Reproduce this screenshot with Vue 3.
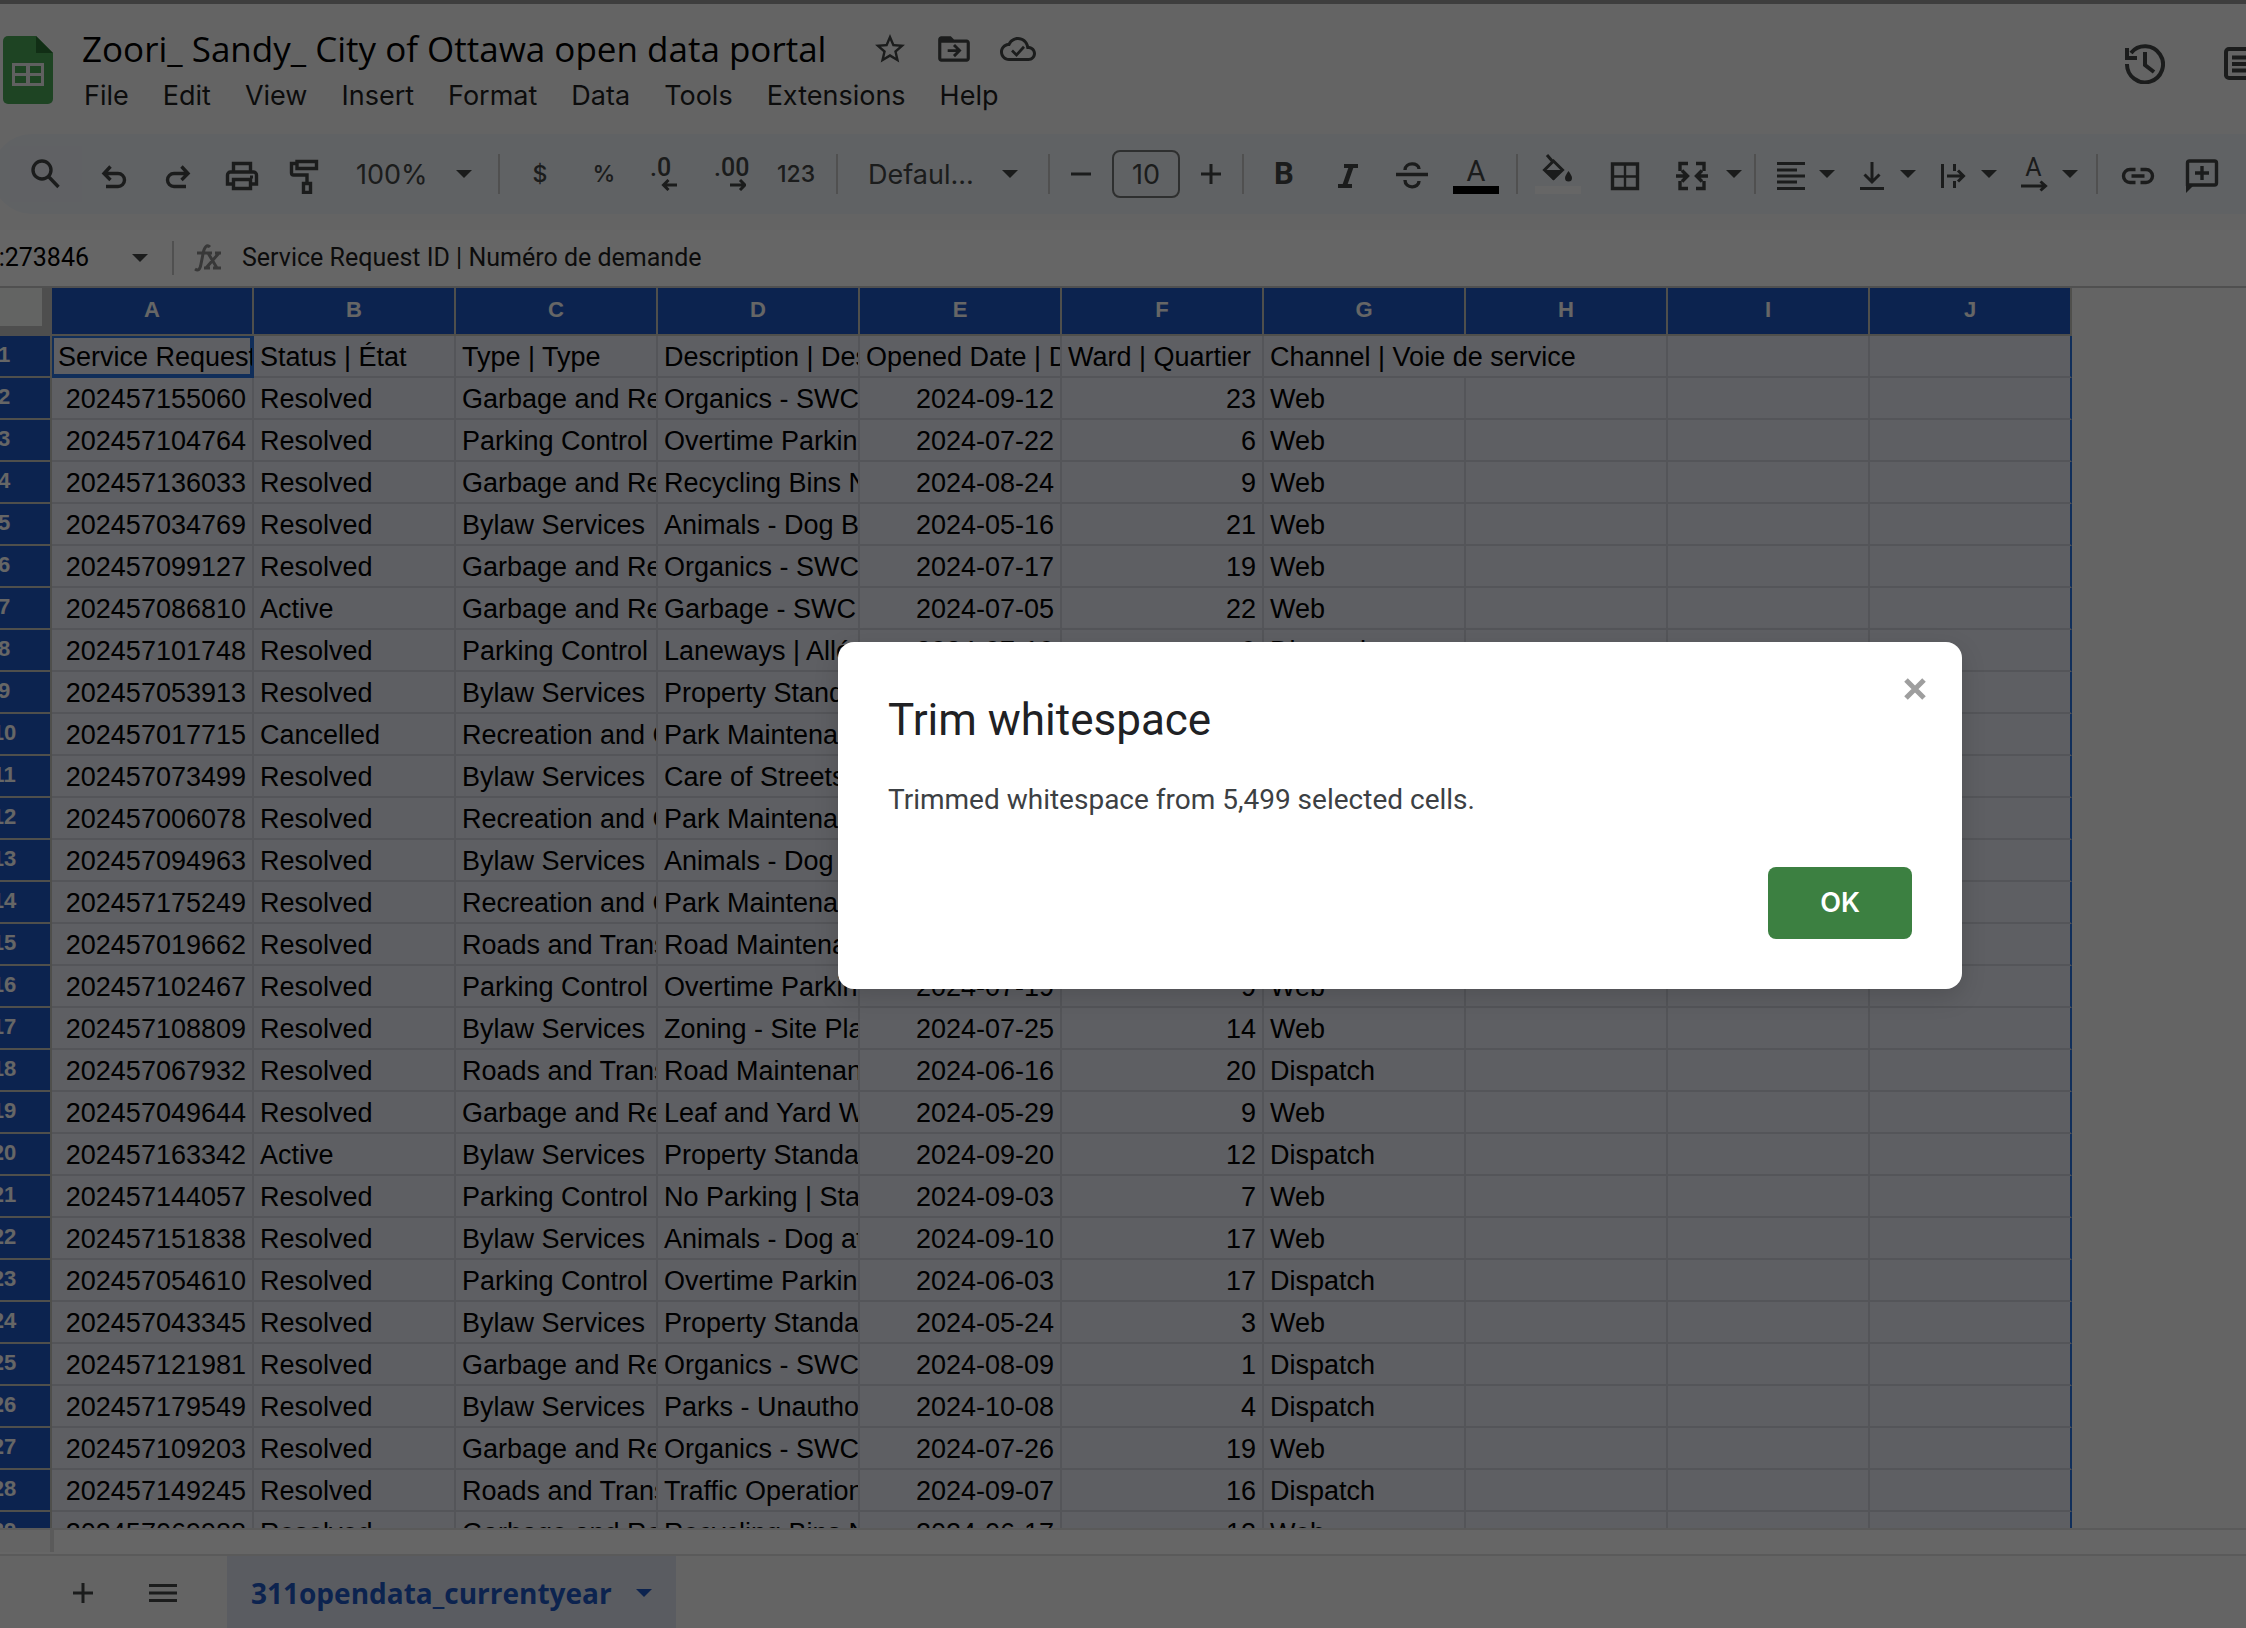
<script setup>
import { ref, h } from 'vue'

const documentTitle = ref('Zoori_ Sandy_ City of Ottawa open data portal')
const menus = ['File', 'Edit', 'View', 'Insert', 'Format', 'Data', 'Tools', 'Extensions', 'Help']
const columns = ['A', 'B', 'C', 'D', 'E', 'F', 'G', 'H', 'I', 'J']
const formula = ref('Service Request ID | Numéro de demande')
const nameBox = ref(':273846')
const fontSize = ref('10')
const dialogOpen = ref(true)

const GARBAGE = 'Garbage and Re'
const PARKING = 'Parking Control E'
const BYLAW = 'Bylaw Services'
const ROADS = 'Roads and Trans'
const RECREATION = 'Recreation and C'

const headings = ['Service Request', 'Status | État', 'Type | Type', 'Description | Des', 'Opened Date | D', 'Ward | Quartier']

const rows = [
  ['202457155060', 'Resolved', GARBAGE, 'Organics - SWC', '2024-09-12', '23', 'Web'],
  ['202457104764', 'Resolved', PARKING, 'Overtime Parking', '2024-07-22', '6', 'Web'],
  ['202457136033', 'Resolved', GARBAGE, 'Recycling Bins N', '2024-08-24', '9', 'Web'],
  ['202457034769', 'Resolved', BYLAW, 'Animals - Dog Ba', '2024-05-16', '21', 'Web'],
  ['202457099127', 'Resolved', GARBAGE, 'Organics - SWC', '2024-07-17', '19', 'Web'],
  ['202457086810', 'Active', GARBAGE, 'Garbage - SWC', '2024-07-05', '22', 'Web'],
  ['202457101748', 'Resolved', PARKING, 'Laneways | Allées', '2024-07-19', '9', 'Dispatch'],
  ['202457053913', 'Resolved', BYLAW, 'Property Standa', '', '', ''],
  ['202457017715', 'Cancelled', RECREATION, 'Park Maintenan', '', '', ''],
  ['202457073499', 'Resolved', BYLAW, 'Care of Streets', '', '', ''],
  ['202457006078', 'Resolved', RECREATION, 'Park Maintenan', '', '', ''],
  ['202457094963', 'Resolved', BYLAW, 'Animals - Dog', '', '', ''],
  ['202457175249', 'Resolved', RECREATION, 'Park Maintenan', '', '', ''],
  ['202457019662', 'Resolved', ROADS, 'Road Maintenan', '', '', ''],
  ['202457102467', 'Resolved', PARKING, 'Overtime Parking', '2024-07-19', '9', 'Web'],
  ['202457108809', 'Resolved', BYLAW, 'Zoning - Site Pla', '2024-07-25', '14', 'Web'],
  ['202457067932', 'Resolved', ROADS, 'Road Maintenan', '2024-06-16', '20', 'Dispatch'],
  ['202457049644', 'Resolved', GARBAGE, 'Leaf and Yard W', '2024-05-29', '9', 'Web'],
  ['202457163342', 'Active', BYLAW, 'Property Standa', '2024-09-20', '12', 'Dispatch'],
  ['202457144057', 'Resolved', PARKING, 'No Parking | Sta', '2024-09-03', '7', 'Web'],
  ['202457151838', 'Resolved', BYLAW, 'Animals - Dog at', '2024-09-10', '17', 'Web'],
  ['202457054610', 'Resolved', PARKING, 'Overtime Parking', '2024-06-03', '17', 'Dispatch'],
  ['202457043345', 'Resolved', BYLAW, 'Property Standa', '2024-05-24', '3', 'Web'],
  ['202457121981', 'Resolved', GARBAGE, 'Organics - SWC', '2024-08-09', '1', 'Dispatch'],
  ['202457179549', 'Resolved', BYLAW, 'Parks - Unautho', '2024-10-08', '4', 'Dispatch'],
  ['202457109203', 'Resolved', GARBAGE, 'Organics - SWC', '2024-07-26', '19', 'Web'],
  ['202457149245', 'Resolved', ROADS, 'Traffic Operation', '2024-09-07', '16', 'Dispatch'],
  ['202457069988', 'Resolved', GARBAGE, 'Recycling Bins N', '2024-06-17', '12', 'Web'],
]
const rightAligned = new Set([0, 4, 5])

// Stroked outlines (s), thin strokes (t) and solid shapes (f), drawn in a 40 x 40 box; dropdown icons use a 32 x 40 box.
const shapes = {
  search: { s: 'M25 16a9 9 0 1 1-18 0a9 9 0 0 1 18 0zM22 22L32.500 33' },
  undo: { s: 'M16.500 12.500L10 19.500l6.500 6.500M10.500 19.500H24a6.500 6.500 0 0 1 0 13H12' },
  redo: { s: 'M23.500 12.500L30 19.500l-6.500 6.500M29.500 19.500H16a6.500 6.500 0 0 0 0 13H28' },
  print: { s: 'M11.500 17V9.500h17V17M11.500 30H5.500V21a3 3 0 0 1 3-3h23a3 3 0 0 1 3 3v9h-6M11.500 25.500h17v9h-17z', f: 'M28 21.500h3v3h-3z' },
  paint: { s: 'M11 7.500h19.500v7H11zM11 9.500H5.500v9.500a2 2 0 0 0 2 2H21V28M17.500 29.500h7v9h-7z' },
  italic: { s: 'M16 12h14M10 32h14', f: 'M21 12h5l-7 20h-5z' },
  strike: { s: 'M4 20.500h32M13 16c0-8 14-8 14-1M13 26c0 9 14 9 14 1' },
  bucket: { s: 'M9 1l6 7M15.500 7l-9 9 9 8.500 9-8.500z', f: 'M6 16h19l-9 10h-1zM30.500 17c-2 3-3.500 5-3.500 7a3.500 3.500 0 0 0 7 0c0-2-1.500-4-3.500-7z' },
  borders: { s: 'M10.500 10h25v24.500h-25z', t: 'M23 10v24M10 22.500h26' },
  merge: { s: 'M12 9.500H4V17M12 34.500H4V27M20 9.500h8V17M20 34.500h8V27M-1 22h11M6 16.500l5.500 5.500L6 27.500M33 22H22M26 16.500L20.500 22l5.500 5.500' },
  align: { s: 'M2 9.500h28M2 16h20M2 22h28M2 28h20M2 34.500h28' },
  bottom: { s: 'M4 34.500h24M16 8v19M8.500 20.500l7.500 7.500 7.500-7.500' },
  wrap: { s: 'M5.500 10v24M17.500 10v7M17.500 27v7M10 22h16M21 16.500l5.500 5.500-5.500 5.500' },
  rotate: { s: 'M3 31h24M22.500 26.500l5 4.500-5 4.500' },
  link: { s: 'M17.500 15.500H12a6.500 6.500 0 0 0 0 13h5.500M22.500 15.500H28a6.500 6.500 0 0 1 0 13h-5.500M13.500 22h13' },
  comment: { s: 'M5.500 32V9a2 2 0 0 1 2-2h25a2 2 0 0 1 2 2v20a2 2 0 0 1-2 2H7M13 19h14M20 12v14', f: 'M4 30h9l-9 9z' },
  minus: { s: 'M10 20h20' },
  plus: { s: 'M10 20h20M20 10v20' },
  less: { s: 'M35 32H22M26.500 27L21.500 32l5 5' },
  more: { s: 'M20 32h14M30 27l5 5-5 5' },
  history: { s: 'M2 20A18 18 0 1 0 6 9M20 8v13l9 7', f: 'M0 4h4v8h8v4H0z' },
  notes: { s: 'M5 2h40M2 5v24M5 31h40M2 5a3 3 0 0 1 3-3M2 28a3 3 0 0 0 3 3M8 10.500h30M8 17h30M8 23.500h30' },
}

const Icon = (props) => {
  const shape = shapes[props.name]
  const box = props.box || '0 0 40 40'
  const [, , w, height] = box.split(' ')
  return h('svg', { viewBox: box, width: w, height, 'aria-hidden': 'true' }, [
    shape.s && h('path', { d: shape.s, fill: 'none', stroke: 'currentColor', 'stroke-width': props.weight || 3.4 }),
    shape.t && h('path', { d: shape.t, fill: 'none', stroke: 'currentColor', 'stroke-width': 2.4 }),
    shape.f && h('path', { d: shape.f, fill: 'currentColor' }),
  ])
}
Icon.props = ['name', 'box', 'weight']

const Caret = () => h('svg', { viewBox: '0 0 16 8', width: 16, height: 8, 'aria-hidden': 'true' }, [
  h('path', { d: 'M0 0h16L8 8z', fill: 'currentColor' }),
])
</script>

<template>
  <div class="app">
    <div class="window-edge"></div>
    <header class="header">
      <svg class="logo" viewBox="0 0 50 68" width="50" height="68" aria-hidden="true">
        <path d="M5 0h28l17 17v46a5 5 0 0 1-5 5H5a5 5 0 0 1-5-5V5a5 5 0 0 1 5-5z" fill="#4caa57" />
        <path d="M33 0l17 17H33z" fill="#2c7336" />
        <path d="M9 27h32v23H9zM12 30v7h11v-7zM27 30v7h11v-7zM12 40v7h11v-7zM27 40v7h11v-7z" fill="#f1f1f1" fill-rule="evenodd" />
      </svg>
      <div class="heading">
        <div class="title-row">
          <h1 class="title">{{ documentTitle }}</h1>
          <button class="title-button" aria-label="Star">
            <svg viewBox="0 0 24 24" width="36" height="36"><path fill="currentColor" d="M22 9.240l-7.190-.62L12 2 9.190 8.630 2 9.240l5.460 4.730L5.820 21 12 17.270 18.180 21l-1.630-7.030L22 9.240zM12 15.400l-3.760 2.270 1-4.280-3.320-2.880 4.380-.38L12 6.100l1.710 4.040 4.380.38-3.320 2.880 1 4.280L12 15.400z" /></svg>
          </button>
          <button class="title-button" aria-label="Move">
            <svg viewBox="0 0 24 24" width="38" height="38">
              <path fill="currentColor" d="M20 6h-8l-2-2H4c-1.100 0-2 .9-2 2v12c0 1.100.9 2 2 2h16c1.100 0 2-.9 2-2V8c0-1.100-.9-2-2-2zm0 12H4V8h16v10z" />
              <path fill="none" stroke="currentColor" stroke-width="1.800" d="M8 13h7M12 9.500l3.500 3.500-3.500 3.500" />
            </svg>
          </button>
          <button class="title-button" aria-label="See document status">
            <svg viewBox="0 0 24 24" width="36" height="36">
              <path fill="currentColor" d="M19.350 10.040C18.670 6.590 15.640 4 12 4 9.110 4 6.600 5.640 5.350 8.040 2.340 8.360 0 10.910 0 14c0 3.310 2.690 6 6 6h13c2.760 0 5-2.240 5-5 0-2.640-2.050-4.780-4.650-4.960zM19 18H6c-2.210 0-4-1.790-4-4 0-2.050 1.530-3.760 3.560-3.970l1.070-.11.5-.95C8.080 7.140 9.940 6 12 6c2.620 0 4.880 1.860 5.390 4.430l.3 1.500 1.530.11c1.560.1 2.780 1.410 2.780 2.960 0 1.650-1.350 3-3 3z" />
              <path fill="none" stroke="currentColor" stroke-width="1.800" d="M8 13l3 3 5-5.500" />
            </svg>
          </button>
        </div>
        <nav class="menus">
          <button v-for="menu in menus" :key="menu" class="menu">{{ menu }}</button>
        </nav>
      </div>
      <div class="header-actions">
        <button class="header-button" aria-label="Version history"><Icon name="history" :weight="4" /></button>
        <button class="header-button" aria-label="Comments"><Icon name="notes" box="0 0 40 34" :weight="4" /></button>
      </div>
    </header>

    <div class="toolbar" role="toolbar">
      <button class="search" aria-label="Search the menus"><Icon name="search" /></button>
      <button class="tool" aria-label="Undo"><Icon name="undo" /></button>
      <button class="tool" aria-label="Redo"><Icon name="redo" /></button>
      <button class="tool" aria-label="Print"><Icon name="print" /></button>
      <button class="tool" aria-label="Paint format"><Icon name="paint" /></button>
      <label class="picker zoom-picker">
        <select class="picker-select" aria-label="Zoom"><option>100%</option></select>
        <Caret />
      </label>
      <span class="divider"></span>
      <button class="tool symbol">$</button>
      <button class="tool symbol">%</button>
      <button class="tool decimal" aria-label="Decrease decimal places"><span>.0</span><Icon name="less" box="12 26 28 12" :weight="3" /></button>
      <button class="tool decimal" aria-label="Increase decimal places"><span>.00</span><Icon name="more" box="8 26 28 12" :weight="3" /></button>
      <button class="tool symbol">123</button>
      <span class="divider"></span>
      <label class="picker font-picker">
        <select class="picker-select" aria-label="Font"><option>Defaul...</option></select>
        <Caret />
      </label>
      <span class="divider"></span>
      <button class="step" aria-label="Decrease font size"><Icon name="minus" :weight="3" /></button>
      <input v-model="fontSize" class="size" aria-label="Font size" />
      <button class="step" aria-label="Increase font size"><Icon name="plus" :weight="3" /></button>
      <span class="divider"></span>
      <button class="tool bold">B</button>
      <button class="tool" aria-label="Italic"><Icon name="italic" :weight="4" /></button>
      <button class="tool" aria-label="Strikethrough"><Icon name="strike" /></button>
      <button class="tool swatch"><span class="letter">A</span><span class="ink"></span></button>
      <span class="divider"></span>
      <button class="tool swatch" aria-label="Fill color"><Icon name="bucket" box="0 0 40 30" :weight="3" /><span class="ink paper"></span></button>
      <button class="tool" aria-label="Borders"><Icon name="borders" /></button>
      <button class="drop drop-wide" aria-label="Merge cells"><Icon name="merge" box="0 0 32 40" /><Caret /></button>
      <span class="divider"></span>
      <button class="drop" aria-label="Horizontal align"><Icon name="align" box="0 0 32 40" :weight="3" /><Caret /></button>
      <button class="drop" aria-label="Vertical align"><Icon name="bottom" box="0 0 32 40" :weight="3" /><Caret /></button>
      <button class="drop" aria-label="Text wrapping"><Icon name="wrap" box="0 0 32 40" :weight="3" /><Caret /></button>
      <button class="drop" aria-label="Text rotation">
        <span class="rotation"><span class="rotation-letter">A</span><Icon name="rotate" box="0 25 32 12" :weight="3" /></span><Caret />
      </button>
      <span class="divider"></span>
      <button class="tool" aria-label="Insert link"><Icon name="link" /></button>
      <button class="tool" aria-label="Insert comment"><Icon name="comment" /></button>
    </div>

    <div class="formula-bar">
      <input v-model="nameBox" class="name-box" aria-label="Name box" />
      <button class="name-caret" aria-label="Named ranges"><Caret /></button>
      <span class="formula-divider"></span>
      <svg class="fx" viewBox="0 0 28 28" width="28" height="28" aria-hidden="true">
        <path d="M16 3c-3-3-6 0-7 7L7 20c-1 6-3 7-6 5M3 9h10M12 9h6M21 9h6M10 24h6M19 24h8M14 9l9 15M25 9L12 24" fill="none" stroke="currentColor" stroke-width="3" />
      </svg>
      <input v-model="formula" class="formula" aria-label="Formula bar" />
    </div>

    <main class="grid">
      <table class="sheet">
        <colgroup>
          <col class="col-index" />
          <col v-for="c in columns" :key="c" class="col-data" />
        </colgroup>
        <thead>
          <tr>
            <td class="corner"></td>
            <th v-for="c in columns" :key="c" scope="col">{{ c }}</th>
          </tr>
        </thead>
        <tbody>
          <tr>
            <th scope="row">1</th>
            <td v-for="(text, i) in headings" :key="i" :class="{ active: i === 0 }">{{ text }}</td>
            <td colspan="2">Channel | Voie de service</td>
            <td></td>
            <td></td>
          </tr>
          <tr v-for="(row, r) in rows" :key="r">
            <th scope="row">{{ r + 2 }}</th>
            <td v-for="(text, i) in row" :key="i" :class="{ number: rightAligned.has(i) }">{{ text }}</td>
            <td></td>
            <td></td>
            <td></td>
          </tr>
        </tbody>
      </table>
    </main>

    <div class="scroll-track"><span class="freeze-edge"></span></div>

    <footer class="tabs">
      <button class="tab-tool" aria-label="Add sheet"><Icon name="plus" :weight="3" /></button>
      <button class="tab-tool" aria-label="All sheets">
        <svg viewBox="0 0 28 18" width="28" height="18"><path d="M0 1.500h28M0 9h28M0 16.500h28" fill="none" stroke="currentColor" stroke-width="3" /></svg>
      </button>
      <button class="tab">311opendata_currentyear<Caret /></button>
    </footer>

    <div v-if="dialogOpen" class="scrim">
      <section class="dialog" role="dialog" aria-labelledby="dialog-title">
        <h2 id="dialog-title" class="dialog-title">Trim whitespace</h2>
        <p class="dialog-text">Trimmed whitespace from 5,499 selected cells.</p>
        <button class="ok" @click="dialogOpen = false">OK</button>
        <button class="close" aria-label="Close" @click="dialogOpen = false">
          <svg viewBox="0 0 22 22" width="22" height="22"><path d="M2 2l18 18M20 2L2 20" stroke="#9e9e9e" stroke-width="5" /></svg>
        </button>
      </section>
    </div>
  </div>
</template>

<style>
body {
  margin: 0;
}
</style>

<style scoped>
.app {
  position: relative;
  display: flex;
  flex-direction: column;
  height: 100vh;
  overflow: hidden;
  background: #fafbfb;
  color: #444746;
  font-family: Inter, Roboto, "Liberation Sans", sans-serif;
  font-size: 27px;
}

.window-edge {
  flex: none;
  height: 4px;
  background: #9c9c9c;
}

svg {
  display: block;
  flex: none;
}

button,
input,
select {
  margin: 0;
  padding: 0;
  border: 0;
  background: none;
  color: inherit;
  font: inherit;
  outline: none;
}

button {
  display: flex;
  align-items: center;
  justify-content: center;
  flex: none;
}

/* Header */
.header {
  display: flex;
  align-items: flex-start;
  flex: none;
  height: 130px;
  box-sizing: border-box;
  padding: 23px 0 0 3px;
}

.logo {
  margin-top: 9px;
}

.heading {
  display: flex;
  flex-direction: column;
  gap: 5px;
  margin-left: 29px;
}

.title-row {
  display: flex;
  align-items: center;
  height: 44px;
}

.title {
  margin: 0 32px 0 0;
  color: #000;
  font: 400 35px/44px "Open Sans", "Noto Sans", sans-serif;
  white-space: nowrap;
}

.title-button {
  width: 64px;
}

.menus {
  display: flex;
  gap: 34px;
  margin-left: 2px;
}

.menu {
  color: #1f1f1f;
  line-height: 40px;
}

.header-actions {
  display: flex;
  align-items: center;
  gap: 59px;
  margin: 17px -18px 0 auto;
}

/* Toolbar */
.toolbar {
  display: flex;
  align-items: center;
  flex: none;
  height: 80px;
  margin-left: -8px;
  padding-left: 18px;
  border-radius: 40px 0 0 40px;
  background: #f0f4f9;
}

.search {
  width: 72px;
  height: 56px;
  background: #eff2fa;
}

.tool {
  width: 64px;
  height: 60px;
}

.divider {
  flex: none;
  width: 2px;
  height: 40px;
  margin: 0 8px;
  background: #c7c7c7;
}

.picker {
  display: flex;
  align-items: center;
  justify-content: space-between;
  flex: none;
  box-sizing: border-box;
}

.picker-select {
  appearance: none;
}

.zoom-picker {
  width: 152px;
  padding: 0 18px;
}

.font-picker {
  width: 194px;
  padding: 0 22px;
}

.symbol {
  font-size: 23px;
  font-weight: 500;
}

.decimal {
  flex-direction: column;
  font: 500 25px/22px Roboto, sans-serif;
}

.decimal span {
  align-self: flex-start;
  padding-left: 14px;
}

.step {
  width: 46px;
}

.size {
  width: 68px;
  height: 48px;
  margin: 0 8px;
  box-sizing: border-box;
  border: 2px solid #747775;
  border-radius: 8px;
  text-align: center;
}

.bold {
  font: 700 31px/40px Roboto, sans-serif;
}

.swatch {
  flex-direction: column;
  justify-content: flex-end;
  gap: 2px;
  height: 40px;
}

.letter {
  height: 30px;
  font: 400 29px/34px Roboto, sans-serif;
}

.ink {
  width: 46px;
  height: 8px;
  background: #000;
}

.paper {
  background: #fff;
}

.drop {
  gap: 12px;
  width: 81px;
}

.drop-wide {
  gap: 18px;
  width: 92px;
  padding-left: 18px;
}

.rotation {
  display: flex;
  flex-direction: column;
}

.rotation-letter {
  font: 400 25px/24px Roboto, sans-serif;
}

/* Formula bar */
.formula-bar {
  display: flex;
  align-items: center;
  flex: none;
  height: 56px;
  margin-top: 16px;
  border-bottom: 2px solid #c7c7c7;
  background: #fff;
  font: 400 25px/32px Roboto, sans-serif;
}

.name-box {
  width: 108px;
  margin-left: -19px;
  color: #000;
  text-align: right;
}

.name-caret {
  width: 102px;
}

.formula-divider {
  width: 2px;
  height: 34px;
  margin-left: -19px;
  background: #c7c7c7;
}

.fx {
  margin: 0 20px;
  color: #8c8c8c;
}

.formula {
  flex: 1;
  color: #1f1f1f;
}

/* Grid */
.grid {
  flex: 1;
  min-height: 0;
  overflow: hidden;
}

.sheet {
  width: 2114px;
  margin-left: -42px;
  border-collapse: separate;
  border-spacing: 0;
  table-layout: fixed;
  font-family: "Liberation Sans", Arial, sans-serif;
}

.col-index {
  width: 94px;
}

.col-data {
  width: 202px;
}

.sheet th {
  box-sizing: border-box;
  height: 42px;
  padding: 0 0 2px;
  border-right: 2px solid #c6c6be;
  border-bottom: 2px solid #c6c6be;
  background: #2058c5;
  color: #fff;
  font-size: 22px;
  line-height: 24px;
}

.sheet thead th {
  height: 48px;
}

.sheet .corner {
  box-sizing: border-box;
  padding: 0;
  border-right: 10px solid #c4c4c4;
  border-bottom: 10px solid #c4c4c4;
  background: #f8faf8;
}

.sheet tbody td {
  box-sizing: border-box;
  height: 42px;
  padding: 2px 6px 0;
  overflow: hidden;
  border-right: 2px solid #d2d5de;
  border-bottom: 2px solid #d2d5de;
  background: #ebeef7;
  color: #000;
  font-size: 27px;
  line-height: 38px;
  white-space: nowrap;
}

.sheet tbody td:last-child {
  border-right-color: #2a73e0;
}

.sheet tbody .number {
  text-align: right;
}

.sheet tbody .active {
  border-color: #2a73e0;
  box-shadow: inset 0 0 0 2px #2a73e0;
}

.scroll-track {
  flex: none;
  height: 24px;
  border-top: 2px solid #e1e1e1;
  border-bottom: 2px solid #e1e1e1;
  background: #fff;
}

.freeze-edge {
  display: block;
  width: 50px;
  height: 22px;
  border-right: 4px solid #e1e1e1;
  background: #fafbfb;
}

/* Sheet tabs */
.tabs {
  display: flex;
  flex: none;
  height: 72px;
  padding-left: 43px;
}

.tab-tool {
  width: 80px;
  padding-top: 2px;
}

.tab {
  gap: 24px;
  margin-left: 24px;
  padding: 2px 24px 0;
  background: #e1e6f2;
  color: #2058c5;
  font: 700 28px/40px "Open Sans", "Noto Sans", sans-serif;
}

/* Dialog */
.scrim {
  position: absolute;
  inset: 0;
  display: flex;
  align-items: center;
  justify-content: center;
  padding: 3px 0 0 554px;
  background: rgba(0, 0, 0, 0.6);
}

.dialog {
  position: relative;
  display: flex;
  flex-direction: column;
  width: 1124px;
  box-sizing: border-box;
  padding: 50px;
  border-radius: 16px;
  background: #fff;
  box-shadow: 0 8px 24px rgba(0, 0, 0, 0.15);
  font-family: Roboto, sans-serif;
}

.dialog-title {
  margin: 0;
  color: #202124;
  font-size: 44px;
  font-weight: 400;
  line-height: 56px;
}

.dialog-text {
  margin: 32px 0 47px;
  color: #3c4043;
  font-size: 28px;
  line-height: 40px;
}

.ok {
  align-self: flex-end;
  width: 144px;
  height: 72px;
  border-radius: 8px;
  background: #3c8041;
  color: #fff;
  font: 600 27px/40px Inter, sans-serif;
}

.close {
  position: absolute;
  top: 25px;
  right: 25px;
  width: 44px;
  height: 44px;
}
</style>
